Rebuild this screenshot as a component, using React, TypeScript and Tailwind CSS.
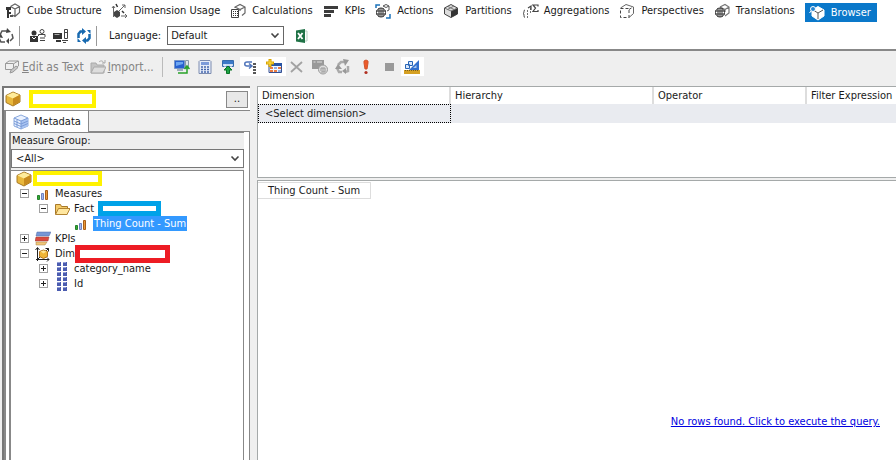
import type { ReactNode } from "react";

type IconProps = { name: string };

const Box = ({ children, className = "" }: { children: ReactNode; className?: string }) => (
  <svg viewBox="0 0 16 16" className={`h-4 w-4 shrink-0 ${className}`} fill="none" aria-hidden="true">
    {children}
  </svg>
);

const Icon = ({ name }: IconProps) => {
  switch (name) {
    case "cube-structure":
      return (
        <Box>
          <path d="M5.5 3.5L10 1l4.500 2.500v6L10 13.500 7 12M5.500 3.500L10 6l4.500-2.500M10 6v7" stroke="#666" strokeWidth="1.2" />
          <path d="M1 4h5v3H1zM3 7h1v2h2v2H4v4H2V7z" fill="#333" />
          <path d="M5 12h3v2H5z" fill="#555" />
        </Box>
      );
    case "dimension-usage":
      return (
        <Box className="overflow-visible">
          <path d="M1.5 14V3M0 5l1.5-2L3 5M6 9L13 2M10 2h3v3M9 13h6M13 11l2 2-2 2" stroke="#666" />
          <path d="M2 9l3-2 3 2v4l-3 2-3-2z" fill="#444" />
          <path d="M4 1l1.500 3M10 8l2 2" stroke="#333" strokeWidth="1.5" />
        </Box>
      );
    case "calculations":
      return (
        <Box>
          <path d="M5 5V4l5-2.5L15 4v6l-3 2.5M5 4l5 2.5L15 4M10 6.5V8" stroke="#666" strokeWidth="1.2" />
          <path d="M1.5 6.500h7v8h-7z" fill="#fff" stroke="#444" />
          <path d="M3 8.500h5M3 10.500h5M3 12.500h5" stroke="#333" strokeDasharray="1 1" />
        </Box>
      );
    case "kpis":
      return (
        <Box>
          <path d="M1 3h14v3H1zM1 7h10v3H1zM1 11h7v3H1z" fill="#3c3c3c" />
        </Box>
      );
    case "actions":
      return (
        <Box>
          <path d="M1 5V2h4M15 11v4h-4" stroke="#1b73ba" strokeWidth="1.5" />
          <path d="M8 3l3-1.500L14 3v4l-2 1M8 3l3 1.500L14 3" stroke="#555" />
          <circle cx="6" cy="9.5" r="4.5" fill="#fff" stroke="#333" />
          <path d="M1 8h10M1 11h10M4 5v9M6 5v9M8 5v9" stroke="#333" />
        </Box>
      );
    case "partitions":
      return (
        <Box>
          <path d="M1.5 5L8 1.500 14.500 5v6L8 14.500 1.500 11z" fill="#ddd" stroke="#444" />
          <path d="M8 8l6.500-3v6L8 14.500z" fill="#333" />
          <path d="M1.500 5L8 8l6.500-3M5 3.500l6 3M4.500 6.500L11 3" stroke="#777" />
        </Box>
      );
    case "aggregations":
      return (
        <Box className="overflow-visible">
          <path d="M3 7c-2 0 0 3-2 3.500 2 0 0 4 2 4" stroke="#444" />
          <path d="M5 8h1M5 11h1M5 14h1M8 6h1M8 9h1" stroke="#444" strokeWidth="1.5" />
          <path d="M6 5l3-2v4M16 3.500V2h-5L13.500 5 11 8.500h5V7" stroke="#444" strokeWidth="1.2" />
        </Box>
      );
    case "perspectives":
      return (
        <Box>
          <path d="M1.500 5L7 1.500 14.500 4v6.500L10 14.500" stroke="#666" />
          <path d="M10 6.500L14 4M1.500 5.500h8.500v9H1.500z" stroke="#444" strokeDasharray="3 2" />
        </Box>
      );
    case "translations":
      return (
        <Box>
          <path d="M6 4l5-2.500L15 4v6l-4 3M6 4l5 2.500L15 4M11 6v3" stroke="#777" strokeWidth="1.2" />
          <circle cx="6" cy="9.5" r="4.5" fill="#fff" stroke="#333" />
          <path d="M1 8h10M1 11h10M4 5v9M6 5v9M8 5v9" stroke="#333" />
        </Box>
      );
    case "browser":
      return (
        <Box>
          <path d="M3 5l6-3.500L15 5v6l-6 4-6-4z" fill="#fff" stroke="#fff" />
          <path d="M4 5l5 3 5-3M9 8v6" stroke="#555" />
          <circle cx="4" cy="4" r="2.5" fill="#2786d2" stroke="#fff" />
          <path d="M2 6L.5 8" stroke="#fff" />
        </Box>
      );
    case "process":
      return (
        <Box>
          <path d="M2 7l2-4h5M14 6l1 4-3 3M7 14H3l-2-4" stroke="#555" strokeWidth="1.5" />
          <path d="M9 0l4 4-5 1zM11 10v6l-3-3zM0 9l3-3 2 4z" fill="#444" />
        </Box>
      );
    case "user":
      return (
        <Box>
          <circle cx="4" cy="5" r="2.5" fill="#333" />
          <path d="M0 8h8v6H0z" fill="#333" />
          <path d="M2 9l2 2 2-2" stroke="#fff" />
          <circle cx="12" cy="3.5" r="2" stroke="#444" />
          <path d="M8.500 8V6.500H15V9M10 10h5M10 12.500h5" stroke="#444" />
        </Box>
      );
    case "reconnect":
      return (
        <Box>
          <path d="M0 5h9v6H0zM3 12h5v2H3z" fill="#333" />
          <path d="M1.500 6.500h5" stroke="#aaa" />
          <path d="M11.500 1.500h3v9h-3zM9 12.500h6M10 14.500h3M11 4.500h3" stroke="#444" />
        </Box>
      );
    case "refresh":
      return (
        <Box>
          <path d="M6 3.500H4.500L2.500 6v4M10 12.500h1.500l2-2.500V6" stroke="#1769b0" strokeWidth="2.5" />
          <path d="M6 0l4 3.500L6 7zM10 9v7l-4-3.500zM11 2h3.500v4zM1.500 10v4H5z" fill="#1769b0" />
        </Box>
      );
    case "excel":
      return (
        <Box>
          <path d="M9 3h4v10H9z" fill="#fff" stroke="#b7d2c3" />
          <path d="M2 2.500L11 1v14l-9-1.500z" fill="#1f7246" />
          <path d="M4 5l4.500 6M8.500 5L4 11" stroke="#fff" strokeWidth="1.8" />
        </Box>
      );
    case "edit-text":
      return (
        <Box>
          <path d="M1.500 4.500h8v6h-8zM1.500 4.500L5 2h9.500v5L10 10.500M10 4.500L14 2" stroke="#999" />
          <path d="M6 14l1-3 5-4 2 1.500-5 4.500z" fill="#c8c8c8" stroke="#999" />
        </Box>
      );
    case "import":
      return (
        <Box>
          <path d="M1 14V4h5l1 2h7v8z" fill="#c4c4c4" stroke="#aaa" />
          <path d="M1 14l3-6h12l-3 6z" fill="#ddd" stroke="#aaa" />
          <path d="M9 3c2-2 4-1 5 1M12 4h3V1" stroke="#aaa" />
        </Box>
      );
    case "server":
      return (
        <Box>
          <path d="M.5 1.500h10v8H.5z" fill="#2760d0" stroke="#7897c7" />
          <path d="M2 3h7v2L2 7z" fill="#6ca6f2" />
          <path d="M11.500 1.500h3v8h-3z" fill="#dde5ed" stroke="#8999aa" />
          <path d="M3 10h6v2H3z" fill="#9eacba" />
          <path d="M4 14h9V8M10.500 10L13 7l2.500 3" stroke="#29a329" strokeWidth="1.5" />
        </Box>
      );
    case "calculator":
      return (
        <Box>
          <path d="M3 1.500h10l1 1v12H2v-12z" fill="#e6ecf8" stroke="#7c8cb0" />
          <path d="M4 3h8v3H4z" fill="#7c9bda" />
          <path d="M4 8h8M4 10.500h8M4 13h8" stroke="#4466ad" strokeWidth="1.5" strokeDasharray="2 1" />
        </Box>
      );
    case "show-empty":
      return (
        <Box>
          <path d="M2.500 1.500h11v6h-11z" fill="#c3d8f3" stroke="#356bad" />
          <path d="M3 2h10v3H3z" fill="#3c79c8" />
          <path d="M5 5.500v3M11 5.500v3" stroke="#fff" />
          <path d="M6.500 14.500V11H4l4-4 4 4H9.500v3.500z" fill="#1da344" stroke="#087425" />
        </Box>
      );
    case "auto-execute":
      return (
        <Box>
          <path d="M9 3H4C1 3 1 7 4 7h4M6 4.500L9 7 6 9.500" stroke="#4f74ba" strokeWidth="1.5" />
          <path d="M10 5h3M10 8h3M10 11h3M10 14h3" stroke="#222" strokeWidth="1.5" />
        </Box>
      );
    case "aggregation-table":
      return (
        <Box>
          <path d="M3 4.500h12.500v9H3z" fill="#f3f7ff" stroke="#354f91" />
          <path d="M3 4h13v3H3z" fill="#2854a5" />
          <path d="M4 8h3v2H4zM12 8h3v2h-3zM4 11h3v2H4zM8 11h3v2H8z" fill="#e97b42" />
          <path d="M8 8h3v2H8zM12 11h3v2h-3z" fill="#90aee0" />
          <path d="M4 0v8M0 4h8" stroke="#d9a400" strokeWidth="3" />
          <path d="M4 1v6M1 4h6" stroke="#ffe04a" />
        </Box>
      );
    case "delete":
      return (
        <Box>
          <path d="M2 3l11 10M13 3L2 13" stroke="#a2a2a2" strokeWidth="1.8" />
        </Box>
      );
    case "design-mode":
      return (
        <Box>
          <path d="M0 1h12v9H0z" fill="#999" />
          <path d="M1.500 3h2M5 3h5" stroke="#ddd" />
          <circle cx="11" cy="10.5" r="4.5" fill="#ddd" stroke="#999" />
          <path d="M9 12V9h4v4H9M11 9v4" stroke="#999" />
        </Box>
      );
    case "cycle":
      return (
        <Box>
          <path d="M3 6l3-3h3M2 9l2 4h3M13 7v5l-3 1" stroke="#aaa" strokeWidth="2.5" />
          <path d="M8 0l6 1-4 6zM0 10l3-5 4 5zM7 12l4-3v6z" fill="#999" />
        </Box>
      );
    case "execute":
      return (
        <Box>
          <path d="M6 2l2-1 2 1v2L9 10H7L6 4z" fill="#ed5b2a" stroke="#d0542c" />
          <circle cx="8" cy="13.5" r="1.6" fill="#b13022" />
        </Box>
      );
    case "stop":
      return (
        <Box>
          <path d="M4 4h9v8H4z" fill="#999" />
        </Box>
      );
    case "design":
      return (
        <Box>
          <path d="M1.500 5.500h4v4h-4zM4.500 2.500h4v4h-4z" fill="#d9e7fa" stroke="#2764b6" />
          <path d="M15 1v10H5z" fill="#316fce" />
          <path d="M12.500 6v3H9z" fill="#a7c6ed" />
          <path d="M0 11h16v4H0z" fill="#d5a022" />
          <path d="M1 11.500h14" stroke="#795d1a" strokeDasharray="1 1" />
        </Box>
      );
    case "cube":
      return (
        <Box>
          <path d="M1 4.500L8 1l7 3v7l-7 4-7-3.500z" fill="#e9b83c" stroke="#a87a24" />
          <path d="M1.500 4.500L8 1.500 14.500 4 8 7.500z" fill="#ffec9b" />
          <path d="M8 7.500L14.500 4v7L8 14.500z" fill="#c88b1e" />
        </Box>
      );
    case "metadata":
      return (
        <Box>
          <path d="M1 4l7-3 7 3v8l-7 3-7-3z" fill="#eaf2ff" stroke="#8aa9dd" />
          <path d="M8 7l7-3v8l-7 3z" fill="#a9c4f2" />
          <path d="M1 4l7 3 7-3M1 7l7 3 7-3M1 9.500l7 3 7-3M8 7v8M4 5.500V13" stroke="#7b9cd8" />
        </Box>
      );
    case "measure":
      return (
        <Box>
          <path d="M2.500 9.500h2v4h-2z" fill="#36ad35" stroke="#24812b" />
          <path d="M6.500 7.500h2v6h-2z" fill="#a5b9ee" stroke="#6f83bf" />
          <path d="M10.500 4.500h2v9h-2z" fill="#e99838" stroke="#a95f19" />
        </Box>
      );
    case "folder":
      return (
        <Box>
          <path d="M1.500 13V3.500h5l1 2h6v7.500z" fill="#f4cc68" stroke="#a8792a" />
          <path d="M1.500 13.500l3-6H16l-3 6z" fill="#ffe7a0" stroke="#b28331" />
        </Box>
      );
    case "kpi":
      return (
        <Box>
          <path d="M2 1h14l-2 4H1z" fill="#7797d5" stroke="#506eaa" strokeWidth="0.5" />
          <path d="M1 6h13l-1 4H0z" fill="#db4a3f" stroke="#983d32" strokeWidth="0.5" />
          <path d="M1 11h11l-2 3H1z" fill="#f1c67a" stroke="#a58144" strokeWidth="0.5" />
        </Box>
      );
    case "dimension":
      return (
        <Box>
          <path d="M2.500 15V2M.5 4l2-2.500 2 2.500M1 13.500h13M12 11.500l2 2-2 2M3 13L13.500 2.500M10.500 2.500h3v3" stroke="#222" />
          <path d="M4.500 5.500L8.500 4l4 1.500v5l-4 2-4-2z" fill="#f0b535" stroke="#b3761c" />
          <path d="M5.500 5.500l3-1 3 1-3 2z" fill="#ffe590" />
        </Box>
      );
    default:
      return (
        <Box>
          <path d="M3 1h4v4H3zM9 1h4v4H9zM3 6h4v4H3zM9 6h4v4H9zM3 11h4v4H3zM9 11h4v4H9z" fill="#4b5cb0" />
          <path d="M3 1.500h3M9 1.500h3M3 6.500h3M9 6.500h3M3 11.500h3M9 11.500h3" stroke="#929fd8" />
        </Box>
      );
  }
};

const tabs = [
  { icon: "cube-structure", label: "Cube Structure" },
  { icon: "dimension-usage", label: "Dimension Usage" },
  { icon: "calculations", label: "Calculations" },
  { icon: "kpis", label: "KPIs" },
  { icon: "actions", label: "Actions" },
  { icon: "partitions", label: "Partitions" },
  { icon: "aggregations", label: "Aggregations" },
  { icon: "perspectives", label: "Perspectives" },
  { icon: "translations", label: "Translations" },
];

const tools = [
  { icon: "server", label: "Reconnect", on: false },
  { icon: "calculator", label: "Calculated member", on: false },
  { icon: "show-empty", label: "Show empty cells", on: false },
  { icon: "auto-execute", label: "Auto execute", on: true },
  { icon: "aggregation-table", label: "Show aggregations", on: true },
  { icon: "delete", label: "Delete", on: false },
  { icon: "design-mode", label: "Query parameters", on: false },
  { icon: "cycle", label: "Prepare query", on: false },
  { icon: "execute", label: "Execute query", on: false },
  { icon: "stop", label: "Cancel query", on: false },
  { icon: "design", label: "Design mode", on: true },
];

const Chevron = () => (
  <svg viewBox="0 0 10 10" className="pointer-events-none absolute right-1 top-1 h-2.5 w-2.5" aria-hidden="true">
    <path d="M1.5 3.5L5 7l3.5-3.5" fill="none" stroke="#444" strokeWidth="1.6" />
  </svg>
);

const Toggle = ({ open }: { open: boolean }) => (
  <button
    aria-label={open ? "Collapse" : "Expand"}
    className="flex h-[9px] w-[9px] shrink-0 items-center justify-center border border-[#a0a0a0] bg-white"
  >
    <svg viewBox="0 0 5 5" className="h-[5px] w-[5px]" aria-hidden="true">
      <path d={open ? "M0 2.5h5" : "M0 2.5h5M2.5 0v5"} stroke="#222" />
    </svg>
  </button>
);

const Tree = () => (
  <ul className="pl-[9px] leading-[15px]">
    <li className="-ml-1 flex h-[15px] items-center">
      <Icon name="cube" />
      <span className="ml-px h-[15px] w-[69px] border-4 border-[#fff200] bg-white" />
    </li>
    <li className="flex h-[15px] items-center">
      <Toggle open />
      <span className="ml-1.5 mr-1 flex"><Icon name="measure" /></span>
      Measures
    </li>
    <li className="flex h-[15px] items-center pl-[19px]">
      <Toggle open />
      <span className="ml-1.5 mr-1 flex"><Icon name="folder" /></span>
      Fact
      <span className="ml-1 h-[15px] w-[63px] border-[5px] border-[#00a2e8] bg-white" />
    </li>
    <li className="flex h-[15px] items-center pl-[53px]">
      <span className="mr-1 flex"><Icon name="measure" /></span>
      <span className="bg-[#3399ff] px-px text-white">Thing Count - Sum</span>
    </li>
    <li className="flex h-[15px] items-center">
      <Toggle open={false} />
      <span className="ml-1.5 mr-1 flex"><Icon name="kpi" /></span>
      KPIs
    </li>
    <li className="flex h-[15px] items-center">
      <Toggle open />
      <span className="ml-1.5 mr-1 flex"><Icon name="dimension" /></span>
      Dim
      <span className="h-[18px] w-[95px] border-[5px] border-[#ed1c24] bg-white" />
    </li>
    {["category_name", "Id"].map((name) => (
      <li key={name} className="flex h-[15px] items-center pl-[19px]">
        <Toggle open={false} />
        <span className="ml-1.5 mr-1 flex"><Icon name="attribute" /></span>
        {name}
      </li>
    ))}
  </ul>
);

const App = () => {
  return (
    <div className="flex h-screen flex-col overflow-hidden whitespace-nowrap bg-[#efefef] font-['DejaVu_Sans_Condensed','DejaVu_Sans',sans-serif] text-[11px] leading-[14px] text-[#1a1a1a]">
      <header className="border-b-2 border-[#888] bg-white">
        <nav className="flex h-[22px] items-center gap-[10px] pl-[5px]">
          {tabs.map((tab) => (
            <button key={tab.label} className="flex shrink-0 items-center gap-1.5">
              <Icon name={tab.icon} />
              {tab.label}
            </button>
          ))}
          <button className="flex h-[19px] shrink-0 items-center gap-1.5 self-end bg-[#0a78ca] pl-1 pr-1.5 text-white">
            <Icon name="browser" />
            Browser
          </button>
        </nav>
        <div className="flex h-[27px] items-center">
          <button aria-label="Process" className="-ml-0.5 flex"><Icon name="process" /></button>
          <span className="ml-[5px] h-5 w-px bg-[#999]" />
          <div className="ml-2.5 flex gap-[7px]">
            <button aria-label="Change user"><Icon name="user" /></button>
            <button aria-label="Reconnect"><Icon name="reconnect" /></button>
            <button aria-label="Refresh"><Icon name="refresh" /></button>
          </div>
          <span className="ml-1 h-5 w-px bg-[#999]" />
          <label htmlFor="language" className="ml-3">Language:</label>
          <div className="relative ml-1.5">
            <select id="language" className="block h-[19px] w-[117px] appearance-none border border-[#666] bg-white pl-[3px]">
              <option>Default</option>
            </select>
            <Chevron />
          </div>
          <button aria-label="Analyze in Excel" className="ml-2.5"><Icon name="excel" /></button>
        </div>
      </header>

      <div className="flex h-[35px] shrink-0 items-center pb-1 pl-1">
        <button className="flex items-center gap-0.5 text-xs text-[#858585]" disabled>
          <Icon name="edit-text" />
          <span><u>E</u>dit as Text</span>
        </button>
        <button className="ml-1.5 flex items-center gap-0.5 text-xs text-[#858585]" disabled>
          <Icon name="import" />
          <span><u>I</u>mport...</span>
        </button>
        <span className="ml-2 h-5 w-px bg-[#bbb]" />
        <div className="ml-2 flex">
          {tools.map((tool) => (
            <button
              key={tool.label}
              aria-label={tool.label}
              className={`flex h-[19px] w-[23px] items-center justify-center ${tool.on ? "bg-white" : ""}`}
            >
              <Icon name={tool.icon} />
            </button>
          ))}
        </div>
      </div>

      <main className="flex min-h-0 flex-1">
        <aside className="ml-0.5 flex w-[248px] shrink-0 flex-col border-l-2 border-t-2 border-[#777]">
          <div className="flex h-[23px] items-center border-b border-[#888] bg-white pl-px">
            <Icon name="cube" />
            <span className="ml-2 h-[18px] w-[67px] border-4 border-[#fff200] bg-white" />
            <button aria-label="Select cube" className="ml-auto mr-0.5 h-[17px] w-[22px] border border-[#888] bg-[#e8e8e8]">..</button>
          </div>
          <div className="flex h-[21px] border-l-2 border-[#888]">
            <button className="flex w-[83px] items-center gap-[5px] border-r border-[#888] bg-white pl-[7px]">
              <Icon name="metadata" />
              Metadata
            </button>
            <span className="flex-1 border-b border-[#888]" />
          </div>
          <div className="flex min-h-0 flex-1 flex-col border-l-2 border-r border-[#888] bg-white pl-[3px] pr-[5px]">
            <div className="flex min-h-0 flex-1 flex-col border-l-2 border-t border-[#888] bg-[#efefef]">
              <label htmlFor="measure-group" className="block py-px pl-px">Measure Group:</label>
              <div className="relative">
                <select id="measure-group" className="block h-[19px] w-full appearance-none border border-[#777] bg-white pl-1">
                  <option>&lt;All&gt;</option>
                </select>
                <Chevron />
              </div>
              <div className="mt-0.5 flex-1 border-r border-t border-[#888] bg-white">
                <Tree />
              </div>
            </div>
          </div>
        </aside>

        <section className="ml-[7px] flex min-w-0 flex-1 flex-col">
          <div className="h-[92px] border border-r-0 border-[#a5a9a9] bg-white">
            <table className="w-full table-fixed border-separate border-spacing-0 text-left">
              <thead>
                <tr className="h-[17px]">
                  <th className="w-[193px] border-r-2 border-[#ddd] p-0 pl-1 font-normal">Dimension</th>
                  <th className="w-[203px] border-r-2 border-[#ddd] p-0 pl-1 font-normal">Hierarchy</th>
                  <th className="w-[153px] border-r-2 border-[#ddd] p-0 pl-1 font-normal">Operator</th>
                  <th className="p-0 pl-1 font-normal">Filter Expression</th>
                </tr>
              </thead>
              <tbody>
                <tr className="h-[19px] bg-[#e9ebf0]">
                  <td className="border border-dotted border-black p-0 pl-1.5">&lt;Select dimension&gt;</td>
                  <td />
                  <td />
                  <td />
                </tr>
              </tbody>
            </table>
          </div>
          <div className="mt-0.5 flex min-h-0 flex-1 flex-col items-start border-l border-t border-[#a5a9a9] bg-white">
            <div className="mt-px flex h-[17px] items-center border border-l-0 border-[#ddd] px-2.5">Thing Count - Sum</div>
            <a href="#execute" className="mb-[31px] ml-auto mr-4 mt-auto text-[#0000e0] underline">
              No rows found. Click to execute the query.
            </a>
          </div>
        </section>
      </main>
    </div>
  );
};

export default App;
